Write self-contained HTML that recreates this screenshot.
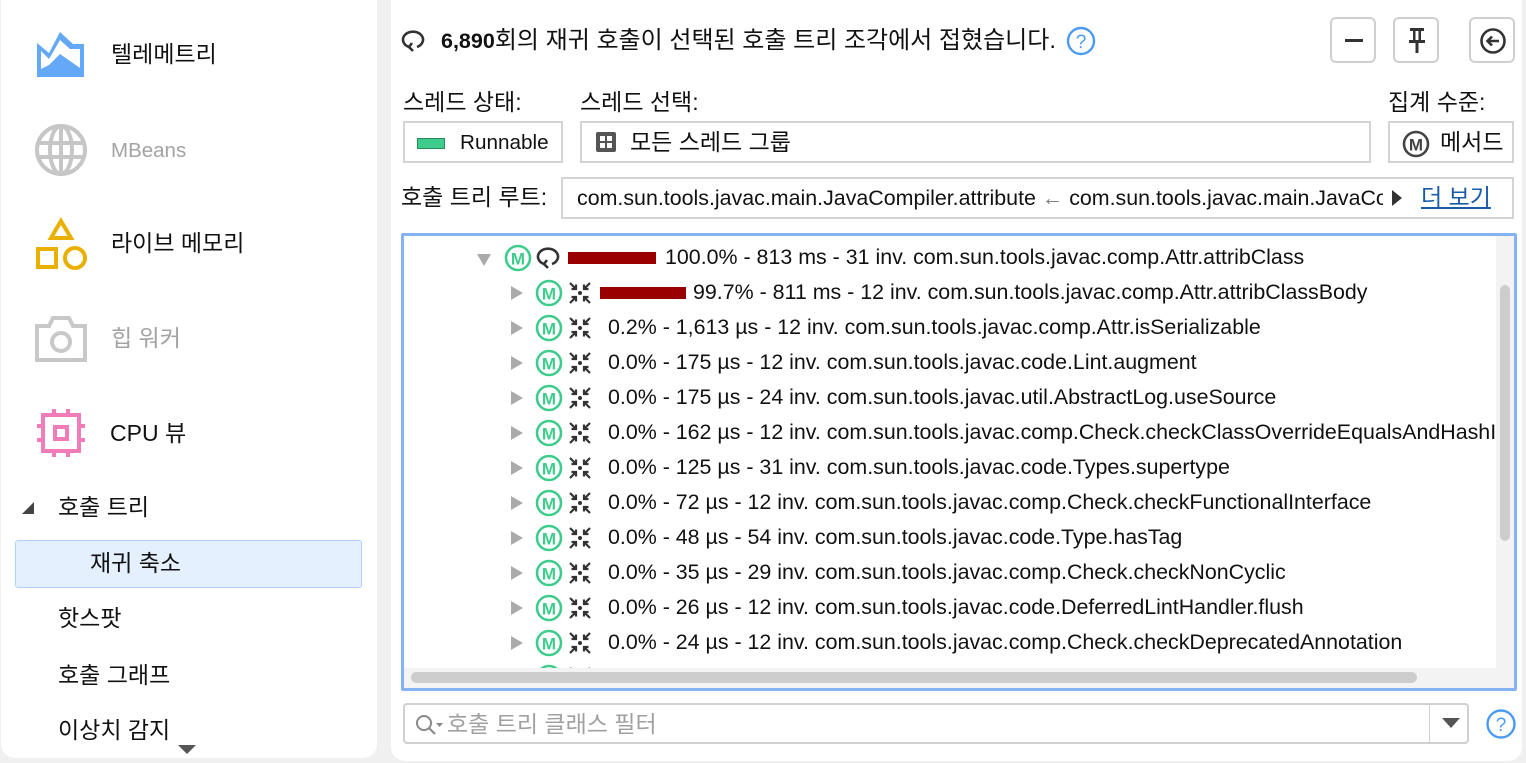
<!DOCTYPE html>
<html><head><meta charset="utf-8"><style>
*{margin:0;padding:0;box-sizing:border-box}
body{width:1526px;height:763px;background:#f0f0f0;font-family:"Liberation Sans","Noto Sans CJK KR",sans-serif;color:#111;position:relative;overflow:hidden}
.a{position:absolute;white-space:nowrap}
.panel{position:absolute;background:#fff;border-radius:14px}
.t{font-size:23px;line-height:26px}
.box{position:absolute;border:2px solid #d4d4d4;background:#fff}
.btn{position:absolute;border:2px solid #cfcfcf;border-radius:6px;background:#fff;width:46px;height:46px}
.row{position:absolute;height:35px;font-size:21.4px;line-height:35px;white-space:nowrap}
.tri{position:absolute;width:0;height:0;border-top:7px solid transparent;border-bottom:7px solid transparent;border-left:12px solid #aaa;top:11px}
</style></head><body>

<div class="panel" style="left:1px;top:-14px;width:376px;height:772px"></div>
<div class="panel" style="left:391px;top:-14px;width:1131px;height:775px"></div>

<!-- Left nav -->
<svg class="a" style="left:36px;top:31px" width="50" height="48" viewBox="0 0 50 48">
<polygon points="1,12 13,22 24,1 37,13 48,13 48,46 1,46" fill="#64a8f8"/>
<polygon points="5,20 13,28 24,9 34,18 44,18 44,37 24,23 13,34 5,38" fill="#fff"/>
</svg>
<div class="a t" style="left:111px;top:41px">텔레메트리</div>

<svg class="a" style="left:33px;top:122px" width="56" height="56" viewBox="0 0 56 56" fill="none" stroke="#c6c6c6" stroke-width="4">
<circle cx="28" cy="28" r="24"/><ellipse cx="28" cy="28" rx="11" ry="24"/><line x1="4" y1="21" x2="52" y2="21"/><line x1="4" y1="35" x2="52" y2="35"/><line x1="28" y1="4" x2="28" y2="52"/>
</svg>
<div class="a" style="left:111px;top:138px;color:#a3a3a3;font-size:20.5px;line-height:26px">MBeans</div>

<svg class="a" style="left:35px;top:217px" width="54" height="56" viewBox="0 0 54 56">
<polygon points="26,4 36,21 16,21" fill="none" stroke="#e9b000" stroke-width="4"/>
<rect x="3" y="32" width="18" height="18" fill="none" stroke="#e9b000" stroke-width="4"/>
<circle cx="40" cy="41" r="10" fill="none" stroke="#e9b000" stroke-width="4"/>
</svg>
<div class="a t" style="left:111px;top:230px">라이브 메모리</div>

<svg class="a" style="left:33px;top:314px" width="56" height="50" viewBox="0 0 56 50" fill="none" stroke="#c8c8c8" stroke-width="4">
<path d="M4,12 H16 L20,4 H36 L40,12 H52 V46 H4 Z"/><circle cx="28" cy="28" r="9"/>
</svg>
<div class="a t" style="left:111px;top:325px;color:#a3a3a3">힙 워커</div>

<svg class="a" style="left:36px;top:408px" width="50" height="50" viewBox="0 0 50 50" fill="none" stroke="#f27cb8" stroke-width="4">
<rect x="7" y="7" width="36" height="36"/><rect x="19" y="19" width="12" height="12"/>
<path d="M18,1v6M32,1v6M18,43v6M32,43v6M1,18h6M1,32h6M43,18h6M43,32h6"/>
</svg>
<div class="a t" style="left:110px;top:420px">CPU 뷰</div>

<svg class="a" style="left:21px;top:501px" width="14" height="14"><polygon points="1,13 13,13 13,1" fill="#444"/></svg>
<div class="a t" style="left:58px;top:494px">호출 트리</div>
<div class="a" style="left:15px;top:540px;width:347px;height:48px;background:#e5f0fe;border:1px solid #b3d1f8;border-radius:3px"></div>
<div class="a t" style="left:90px;top:550px">재귀 축소</div>
<div class="a t" style="left:58px;top:605px">핫스팟</div>
<div class="a t" style="left:58px;top:662px">호출 그래프</div>
<div class="a t" style="left:58px;top:717px">이상치 감지</div>
<svg class="a" style="left:178px;top:745px" width="18" height="10"><polygon points="0,0 18,0 9,9" fill="#555"/></svg>

<!-- Header -->
<svg class="a" style="left:401px;top:29px" width="26" height="24" viewBox="0 0 26 24" fill="none" stroke="#333" stroke-width="2.6">
<path d="M8,18 A10,8 0 1 1 16,18"/><path d="M11,14 L8,18 L12,22"/>
</svg>
<div class="a" style="left:441px;top:28px;font-size:24px;line-height:26px"><b style="font-size:21.5px">6,890</b>회의 재귀 호출이 선택된 호출 트리 조각에서 접혔습니다.</div>
<svg class="a" style="left:1066px;top:26px" width="30" height="30" viewBox="0 0 30 30"><circle cx="15" cy="15" r="13" fill="none" stroke="#4b9bf2" stroke-width="2.4"/><text x="15" y="22" text-anchor="middle" font-size="19" font-family="Liberation Sans" fill="#4b9bf2">?</text></svg>

<div class="btn" style="left:1330px;top:17px"><div class="a" style="left:13px;top:20px;width:18px;height:3px;background:#333"></div></div>
<div class="btn" style="left:1393px;top:17px"><svg class="a" style="left:11px;top:8px" width="22" height="28" viewBox="0 0 22 28" fill="#333"><rect x="4" y="1" width="14" height="3"/><rect x="7" y="4" width="2.5" height="10"/><rect x="12.5" y="4" width="2.5" height="10"/><rect x="3" y="13" width="16" height="3"/><rect x="9.5" y="16" width="3" height="10"/></svg></div>
<div class="btn" style="left:1469px;top:17px"><svg class="a" style="left:8px;top:8px" width="28" height="28" viewBox="0 0 28 28" fill="none" stroke="#333" stroke-width="2.6"><circle cx="14" cy="14" r="11.5"/><path d="M20,14h-11M13,9.5l-4.5,4.5l4.5,4.5"/></svg></div>

<div class="a t" style="left:403px;top:89px">스레드 상태:</div>
<div class="a t" style="left:580px;top:89px">스레드 선택:</div>
<div class="a t" style="left:1388px;top:89px">집계 수준:</div>

<div class="box" style="left:403px;top:121px;width:160px;height:42px"><div class="a" style="left:12px;top:15px;width:28px;height:11px;background:#3ecc8c;border:1px solid #2a8a5e"></div><div class="a" style="left:55px;top:7px;font-size:20.7px;line-height:26px">Runnable</div></div>
<div class="box" style="left:580px;top:121px;width:791px;height:42px">
<svg class="a" style="left:13px;top:8px" width="22" height="22" viewBox="0 0 22 22"><rect x="1" y="1" width="20" height="20" rx="2" fill="#555"/><rect x="5" y="5" width="5" height="5" fill="#fff"/><rect x="12" y="5" width="5" height="5" fill="#fff"/><rect x="5" y="12" width="5" height="5" fill="#fff"/><rect x="12" y="12" width="5" height="5" fill="#fff"/></svg>
<div class="a t" style="left:48px;top:6px">모든 스레드 그룹</div></div>
<div class="box" style="left:1388px;top:121px;width:126px;height:42px">
<svg class="a" style="left:12px;top:7px" width="28" height="28" viewBox="0 0 28 28"><circle cx="14" cy="14" r="12" fill="none" stroke="#444" stroke-width="2.6"/><text x="14" y="20.5" text-anchor="middle" font-size="17" font-weight="bold" font-family="Liberation Sans" fill="#444">M</text></svg>
<div class="a t" style="left:50px;top:6px">메서드</div></div>

<div class="a t" style="left:401px;top:184px">호출 트리 루트:</div>
<div class="box" style="left:561px;top:177px;width:953px;height:42px;overflow:hidden">
<div class="a" style="left:14px;top:6px;width:806px;overflow:hidden;font-size:21.4px;line-height:26px">com.sun.tools.javac.main.JavaCompiler.attribute <span style="color:#777">←</span> com.sun.tools.javac.main.JavaCompiler.attribute</div>
<svg class="a" style="left:829px;top:11px" width="10" height="16"><polygon points="0,0 10,8 0,16" fill="#333"/></svg>
<div class="a t" style="left:858px;top:5px;color:#1a5ba8;text-decoration:underline">더 보기</div>
</div>

<!-- Tree -->
<div class="a" style="left:401px;top:233px;width:1116px;height:458px;border:3px solid #86b2f4;border-radius:2px;background:#fff;overflow:hidden">
<div id="rows" class="a" style="left:0;top:0;width:1092px;height:432px;overflow:hidden">
<div class="row" style="left:0;top:4px">
<div class="tri" style="left:73px;top:14px;border-left:7px solid transparent;border-right:7px solid transparent;border-top:12px solid #aaa;border-bottom:0"></div>
<svg class="a" style="left:100px;top:4px" width="28" height="28" viewBox="0 0 28 28"><circle cx="14" cy="14" r="12" fill="none" stroke="#3ecc8c" stroke-width="2.6"/><text x="14" y="20.5" text-anchor="middle" font-size="17" font-weight="bold" font-family="Liberation Sans" fill="#3ecc8c">M</text></svg>
<svg class="a" style="left:132px;top:6px" width="26" height="24" viewBox="0 0 26 24" fill="none" stroke="#333" stroke-width="2.6"><path d="M8,18 A10,8 0 1 1 16,18"/><path d="M11,14 L8,18 L12,22"/></svg>
<div class="a" style="left:164px;top:12px;width:88px;height:12px;background:#990000"></div>
<div class="a" style="left:261px;top:0">100.0% - 813 ms - 31 inv. com.sun.tools.javac.comp.Attr.attribClass</div>
</div>
</div>
<div class="a" style="left:1092px;top:0;width:20px;height:432px;background:#f3f3f3"><div class="a" style="left:4px;top:49px;width:10px;height:256px;background:#cdcdcd;border-radius:5px"></div></div>
<div class="a" style="left:0;top:432px;width:1112px;height:20px;background:#f3f3f3"><div class="a" style="left:7px;top:4px;width:1006px;height:11px;background:#cdcdcd;border-radius:6px"></div></div>
</div>

<!-- filter -->
<div class="a" style="left:403px;top:703px;width:1066px;height:41px;border:2px solid #d0d0d0;border-radius:4px;background:#fff">
<svg class="a" style="left:9px;top:8px" width="30" height="26" viewBox="0 0 30 26" fill="none" stroke="#888" stroke-width="2"><circle cx="10" cy="10" r="7"/><path d="M15,15l6,6"/><polygon points="22,10 29,10 25.5,14" fill="#888" stroke="none"/></svg>
<div class="a t" style="left:42px;top:6px;color:#a0a0a0">호출 트리 클래스 필터</div>
<div class="a" style="left:1024px;top:0;width:1px;height:37px;background:#d0d0d0"></div>
<svg class="a" style="left:1037px;top:13px" width="18" height="10"><polygon points="0,0 18,0 9,10" fill="#555"/></svg>
</div>
<svg class="a" style="left:1485px;top:708px" width="32" height="32" viewBox="0 0 32 32"><circle cx="16" cy="16" r="13.5" fill="none" stroke="#4b9bf2" stroke-width="2.4"/><text x="16" y="23" text-anchor="middle" font-size="19" font-family="Liberation Sans" fill="#4b9bf2">?</text></svg>

<script>
var d=[["99.7% - 811 ms - 12 inv. com.sun.tools.javac.comp.Attr.attribClassBody",1],
["0.2% - 1,613 µs - 12 inv. com.sun.tools.javac.comp.Attr.isSerializable"],
["0.0% - 175 µs - 12 inv. com.sun.tools.javac.code.Lint.augment"],
["0.0% - 175 µs - 24 inv. com.sun.tools.javac.util.AbstractLog.useSource"],
["0.0% - 162 µs - 12 inv. com.sun.tools.javac.comp.Check.checkClassOverrideEqualsAndHashIfNeeded"],
["0.0% - 125 µs - 31 inv. com.sun.tools.javac.code.Types.supertype"],
["0.0% - 72 µs - 12 inv. com.sun.tools.javac.comp.Check.checkFunctionalInterface"],
["0.0% - 48 µs - 54 inv. com.sun.tools.javac.code.Type.hasTag"],
["0.0% - 35 µs - 29 inv. com.sun.tools.javac.comp.Check.checkNonCyclic"],
["0.0% - 26 µs - 12 inv. com.sun.tools.javac.code.DeferredLintHandler.flush"],
["0.0% - 24 µs - 12 inv. com.sun.tools.javac.comp.Check.checkDeprecatedAnnotation"],
["0.0% - 18 µs - 114 inv. com.sun.tools.javac.code.Type.getTag"]];
var h="";
d.forEach(function(r,i){var top=4+35*(i+1);
h+='<div class="row" style="left:0;top:'+top+'px"><div class="tri" style="left:107px"></div>'+
'<svg class="a" style="left:131px;top:4px" width="28" height="28" viewBox="0 0 28 28"><circle cx="14" cy="14" r="12" fill="none" stroke="#3ecc8c" stroke-width="2.6"/><text x="14" y="20.5" text-anchor="middle" font-size="17" font-weight="bold" font-family="Liberation Sans" fill="#3ecc8c">M</text></svg>'+
'<svg class="a" style="left:164px;top:6px" width="24" height="24" viewBox="0 0 24 24" fill="none" stroke="#333" stroke-width="2.2"><circle cx="12" cy="12" r="2" fill="#333" stroke="none"/><path d="M2,2l6,6M8,3.5v4.5H3.5M22,2l-6,6M16,3.5v4.5h4.5M2,22l6-6M8,20.5v-4.5H3.5M22,22l-6-6M16,20.5v-4.5h4.5"/></svg>'+
(r[1]?'<div class="a" style="left:196px;top:12px;width:86px;height:12px;background:#990000"></div><div class="a" style="left:289px;top:0">'+r[0]+'</div>':'<div class="a" style="left:204px;top:0">'+r[0]+'</div>')+'</div>';});
document.getElementById("rows").insertAdjacentHTML("beforeend",h);
</script>
</body></html>
